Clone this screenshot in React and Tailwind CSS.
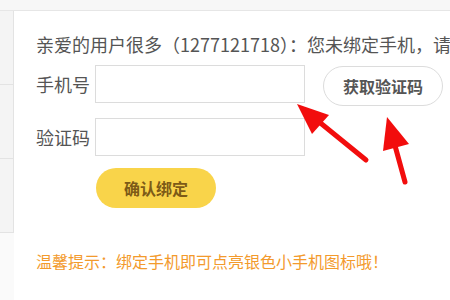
import React from "react";

export default function App() {
  const font = { fontFamily: '"Noto Sans CJK SC", "Noto Sans", sans-serif' };
  return (
    <div className="relative w-[450px] h-[300px] overflow-hidden bg-white" style={font}>
      <div className="h-[11px] bg-[#f7f7f7] border-b border-[#e6e6e6]" />
      <div className="flex h-[289px]">
        <div className="w-[14px] flex flex-col bg-[#fafafa]">
          <div className="h-[74px] bg-[#f4f4f4] border-r border-b border-[#e3e3e3]" />
          <div className="h-[74px] bg-[#f4f4f4] border-r border-b border-[#e3e3e3]" />
          <div className="h-[74px] bg-[#f4f4f4] border-r border-b border-[#e3e3e3]" />
        </div>
        <div className="flex-1 pl-[22px] pt-[21px] overflow-hidden">
          <div className="text-[18px] leading-[24px] text-[#555] whitespace-nowrap">
            亲爱的用户很多（1277121718）：您未绑定手机，请尽快绑定
          </div>
          <div className="flex items-start mt-[9px]">
            <div className="w-[59px] h-[38px] flex items-center text-[18px] text-[#555]">手机号</div>
            <div className="w-[210px] h-[38px] border border-[#dcdcdc] bg-white" />
            <button className="ml-[18px] mt-[1px] w-[120px] h-[40px] rounded-full border border-[#dcdcdc] bg-white text-[16px] font-bold text-[#555]">
              获取验证码
            </button>
          </div>
          <div className="flex items-start mt-[12px]">
            <div className="w-[59px] h-[38px] flex items-center text-[18px] text-[#555]">验证码</div>
            <div className="w-[210px] h-[38px] border border-[#dcdcdc] bg-white" />
          </div>
          <button className="ml-[60px] mt-[12px] w-[120px] h-[40px] rounded-full bg-[#f9d44a] text-[16px] font-bold text-[#7d5b17]">
            确认绑定
          </button>
          <div className="mt-[42px] text-[16px] leading-[22px] text-[#f39a2c] whitespace-nowrap">
            温馨提示：绑定手机即可点亮银色小手机图标哦！
          </div>
        </div>
      </div>
      <svg className="absolute left-0 top-0" width="450" height="300" viewBox="0 0 450 300">
        <line x1="366" y1="160" x2="318" y2="121" stroke="#f20d0d" strokeWidth="5" strokeLinecap="round" />
        <polygon points="297,104 329,115 312,134" fill="#f20d0d" />
        <line x1="405" y1="182" x2="394" y2="142" stroke="#f20d0d" strokeWidth="5" strokeLinecap="round" />
        <polygon points="387,117 409,144 383,151" fill="#f20d0d" />
      </svg>
    </div>
  );
}
